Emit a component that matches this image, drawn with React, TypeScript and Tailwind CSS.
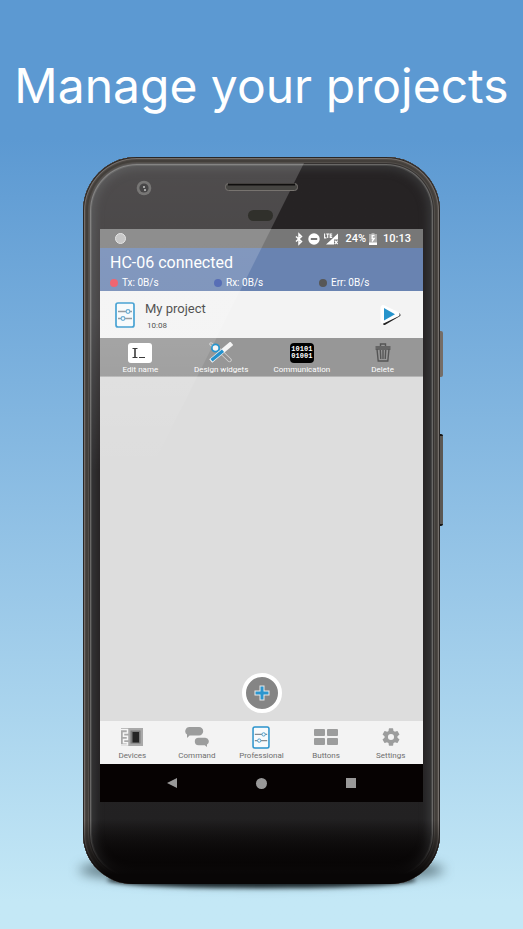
import React from "react";

type IconProps = { className?: string };

const SlidersIcon = ({ className }: IconProps) => (
  <svg className={className} viewBox="0 0 20 26" fill="none" aria-hidden="true">
    <rect x="1" y="1" width="18" height="24" rx="2" fill="#f7fafc" stroke="#2a93cc" strokeWidth="1.700" />
    <path d="M3 9.500h14M3 16.500h14" stroke="#858b90" strokeWidth="1.300" />
    <circle cx="13" cy="9.500" r="1.900" fill="#f7fafc" stroke="#4b9dcc" strokeWidth="1.100" />
    <circle cx="8" cy="16.500" r="1.900" fill="#f7fafc" stroke="#4b9dcc" strokeWidth="1.100" />
  </svg>
);

const DeviceIcon = () => (
  <svg className="h-[18px] w-[22px]" viewBox="0 0 22 18" aria-hidden="true">
    <rect width="22" height="18" fill="#a9a9a9" />
    <path d="M0 1.500h6.500v3.500H2.500v3.200h4v3.300h-4v3.200h4V17H0" fill="none" stroke="#f5f5f5" strokeWidth="1.500" />
    <rect x="9.500" y="2.500" width="10" height="13" fill="#7b7b7b" />
    <rect x="11.500" y="4" width="6.500" height="10.500" fill="#252525" />
  </svg>
);

const ChatIcon = () => (
  <svg className="h-[20px] w-[24px]" viewBox="0 0 24 20" fill="#9c9d9d" aria-hidden="true">
    <path d="M4.500 0h9.500a4.200 4.200 0 0 1 0 8.400H4.600L2 11V7.600A4.200 4.200 0 0 1 4.500 0Z" />
    <path d="M13.500 10.800h6.500a3.600 3.600 0 0 1 2 6.700V20l-2.200-1.800h-6.300a3.700 3.700 0 0 1 0-7.400Z" />
  </svg>
);

const ButtonsIcon = () => (
  <svg className="h-[16px] w-[24px]" viewBox="0 0 24 16" fill="#9c9d9d" aria-hidden="true">
    <rect width="11" height="7" rx="1" />
    <rect x="13" width="11" height="7" rx="1" />
    <rect y="9" width="11" height="7" rx="1" />
    <rect x="13" y="9" width="11" height="7" rx="1" />
  </svg>
);

const GearIcon = () => (
  <svg className="size-[18px]" viewBox="2 2 20 20" fill="#9c9d9d" aria-hidden="true">
    <path d="M19.140 12.940c.04-.3.06-.61.06-.94s-.02-.64-.07-.94l2.030-1.580a.49.49 0 0 0 .12-.61l-1.920-3.320a.49.49 0 0 0-.59-.22l-2.390.96a7 7 0 0 0-1.620-.94l-.36-2.540A.48.48 0 0 0 13.920 2.400h-3.840a.48.48 0 0 0-.47.41l-.36 2.540a7.400 7.400 0 0 0-1.620.94l-2.390-.96a.48.48 0 0 0-.59.22L2.740 8.870a.48.48 0 0 0 .12.61l2.030 1.580c-.05.3-.09.63-.09.94s.02.64.07.94l-2.030 1.580a.49.49 0 0 0-.12.61l1.920 3.320c.12.22.37.29.59.22l2.390-.96c.5.38 1.030.7 1.620.94l.36 2.540c.05.24.24.41.48.41h3.840c.24 0 .44-.17.47-.41l.36-2.540a7 7 0 0 0 1.620-.94l2.390.96c.22.08.47 0 .59-.22l1.920-3.320a.48.48 0 0 0-.12-.61ZM12 15.400a3.400 3.400 0 1 1 0-6.800 3.400 3.400 0 0 1 0 6.800Z" />
  </svg>
);

const RenameIcon = () => (
  <svg className="h-[20px] w-[24px]" viewBox="0 0 24 20" fill="none" stroke="#222" aria-hidden="true">
    <rect width="24" height="20" rx="3" fill="#fff" stroke="none" />
    <path d="M4.500 5.500h5M4.500 14.500h5M11 14.500h6" />
    <path d="M7 5.500v9" strokeWidth="1.600" />
  </svg>
);

const ToolsIcon = () => (
  <svg className="h-[21px] w-[24px]" viewBox="0 0 24 21" fill="none" strokeLinecap="round" aria-hidden="true">
    <path d="M10 8l10.500 10" stroke="#d0d0d0" strokeWidth="4.400" />
    <path d="M10 8l10.500 10" stroke="#929292" strokeWidth="2.600" />
    <path d="M2 2l4 3.500" stroke="#d0d0d0" strokeWidth="3.400" />
    <path d="M2 2l4 3.500" stroke="#929292" strokeWidth="1.600" />
    <circle cx="6.500" cy="6" r="3.700" fill="#f5f5f5" stroke="#2794cc" strokeWidth="1.800" />
    <path d="M3.500 17.500L21 2.800" stroke="#f5f5f5" strokeWidth="4.600" strokeLinecap="square" />
    <path d="M2.500 18.300L14 8.700" stroke="#2491cc" strokeWidth="3.400" strokeLinecap="butt" />
  </svg>
);

const BinaryIcon = () => (
  <span className="flex h-[20px] w-[24px] flex-col items-center justify-center rounded bg-black font-['Liberation_Mono',monospace] text-[7px] leading-[7px] font-bold text-white">
    <span>10101</span>
    <span>01001</span>
  </span>
);

const TrashIcon = () => (
  <svg className="h-[19px] w-[16px]" viewBox="0 0 16 19" fill="none" stroke="#555" strokeWidth="1.400" aria-hidden="true">
    <path d="M5.500 3V1h5v2M.5 4h15M.5 6h15M2 6l1.200 12h9.600L14 6M5.300 7l.5 9M8 7v9M10.700 7l-.5 9" />
  </svg>
);

const PlayIcon = () => (
  <svg className="h-[22px] w-[22px]" viewBox="0 0 22 22" strokeLinejoin="round" aria-hidden="true">
    <path d="M4.500 5v14.500l14.500-8.500Z" fill="#222" stroke="#222" strokeWidth="3" />
    <path d="M3 3.500v13.500l14-6.750Z" fill="#fff" stroke="#fff" strokeWidth="5" />
    <path d="M4 4v12.500l11-6.250Z" fill="#2794cc" />
  </svg>
);

const StatusIcons = () => (
  <svg className="h-[14px] w-[44px]" viewBox="0 0 44 14" fill="none" aria-hidden="true">
    <path d="M1 4.500l5.500 5L4 12V2l2.500 2.500L1 9.500" stroke="#fff" strokeWidth="1.500" />
    <circle cx="19" cy="7" r="5.700" fill="#fff" />
    <path d="M15.800 7h6.400" stroke="#777" strokeWidth="1.800" />
    <path d="M31 12.500L43 1.500V7.500h-4v5Z" fill="#fff" />
    <path d="M39.700 8.700l3 3.500m0-3.500l-3 3.500" stroke="#fff" strokeWidth="1.200" />
    <path d="M29.600 1.500v4.400h1.800M31.200 2h3M32.700 2v3.900M37.200 2h-2v3.400h2M35.200 3.700h2" stroke="#fff" strokeWidth="1.100" />
  </svg>
);

const BatteryIcon = () => (
  <svg className="h-[12px] w-[8px]" viewBox="0 0 8 12" aria-hidden="true">
    <path d="M2.500 0h3v1H8v11H0V1h2.500Z" fill="#adadad" />
    <path d="M0 9.500h8V12H0Z" fill="#fff" />
    <path d="M5.500 2.500H3.200V5.500h2L3 8.500" fill="none" stroke="#fff" strokeWidth="1.300" />
  </svg>
);

const PhoneFace = () => (
  <svg className="pointer-events-none absolute inset-x-0 top-0 h-[72px] w-full" viewBox="0 0 357 72" aria-hidden="true">
    <circle cx="61" cy="31" r="7.300" fill="#777675" />
    <circle cx="61" cy="31" r="4.600" fill="#474647" />
    <path d="M60 29h2v2h-2ZM61 32h2v2h-2Z" fill="#a4a4a4" />
    <rect x="142.500" y="26.500" width="72" height="7" rx="3" fill="#464542" stroke="#77736f" />
    <path d="M145 27.500h67" stroke="#100f0e" strokeWidth="2" />
    <rect x="165" y="53" width="25" height="11" rx="5.500" fill="#30302b" />
  </svg>
);

const stats = [
  { label: "Tx: 0B/s", dot: "bg-[#ec4956]" },
  { label: "Rx: 0B/s", dot: "bg-[#3853a8]" },
  { label: "Err: 0B/s", dot: "bg-[#575757]" },
];

const actions = [
  { label: "Edit name", icon: <RenameIcon /> },
  { label: "Design widgets", icon: <ToolsIcon /> },
  { label: "Communication", icon: <BinaryIcon /> },
  { label: "Delete", icon: <TrashIcon /> },
];

const tabs = [
  { label: "Devices", icon: <DeviceIcon /> },
  { label: "Command", icon: <ChatIcon /> },
  { label: "Professional", icon: <SlidersIcon className="h-[23px] w-[18px]" /> },
  { label: "Buttons", icon: <ButtonsIcon /> },
  { label: "Settings", icon: <GearIcon /> },
];

function Screen() {
  return (
    <div className="flex flex-col bg-[#dddddd]">
      <div className="flex h-[19px] items-center bg-[#777777] pr-3 pl-[15px] text-[11px] font-medium text-white">
        <span className="size-[11px] rounded-full border border-[#e0e0e0] bg-[#bdbdbd]" />
        <div className="ml-auto flex items-center gap-[6px]">
          <StatusIcons />
          <div className="flex items-center gap-[3px] pt-px">
            <span>24%</span>
            <BatteryIcon />
          </div>
          <span className="pt-px">10:13</span>
        </div>
      </div>

      <header className="flex h-[43px] flex-col bg-[#6983b1] px-[10px] pt-[5px] text-white">
        <h2 className="text-base leading-5">HC-06 connected</h2>
        <ul className="grid grid-cols-[104px_105px_1fr] pt-[3px] text-[10px] leading-[14px]">
          {stats.map((s) => (
            <li key={s.label} className="flex items-center gap-1">
              <span className={"size-2 rounded-full " + s.dot} />
              {s.label}
            </li>
          ))}
        </ul>
      </header>

      <section className="flex h-[47px] items-center bg-[#f3f3f3] pr-[21px] pl-[15px]">
        <SlidersIcon className="h-[26px] w-5" />
        <div className="ml-[10px] pt-[4px] text-[#333]">
          <h3 className="text-[13px] leading-4">My project</h3>
          <p className="pt-[3px] pl-[2px] text-[8px] leading-3">10:08</p>
        </div>
        <button type="button" aria-label="Run project" className="ml-auto">
          <PlayIcon />
        </button>
      </section>

      <div className="grid h-[39px] grid-cols-4 border-b border-[#b5b5b5] bg-[#979797]">
        {actions.map((a) => (
          <button key={a.label} type="button" className="flex flex-col items-center pt-[3px] text-[8px] leading-3 whitespace-nowrap text-white">
            <span className="flex h-[23px] items-center">{a.icon}</span>
            {a.label}
          </button>
        ))}
      </div>

      <main className="flex h-[344px] items-end justify-center pb-2">
        <button
          type="button"
          aria-label="Add project"
          className="flex size-10 items-center justify-center rounded-full border-4 border-white bg-[#858585]"
        >
          <svg className="size-5" viewBox="0 0 20 20" fill="none" aria-hidden="true">
            <path d="M10 2.500v15M2.500 10h15" stroke="#e8e8e8" strokeWidth="5" />
            <path d="M10 3.500v13M3.500 10h13" stroke="#2a96cf" strokeWidth="3" />
          </svg>
        </button>
      </main>

      <nav className="grid h-[43px] grid-cols-5 bg-[#f3f3f3]">
        {tabs.map((t) => (
          <button key={t.label} type="button" className="flex flex-col items-center pt-1 text-[8px] leading-3 text-[#6e6e6e]">
            <span className="flex h-6 items-center">{t.icon}</span>
            <span className="pt-px">{t.label}</span>
          </button>
        ))}
      </nav>

      <div className="flex h-[38px] items-center justify-center gap-[79px] bg-[#060202]">
        <button type="button" aria-label="Back">
          <svg className="size-[10px]" viewBox="0 0 10 10" fill="#999" aria-hidden="true">
            <path d="M10 0v10L0 5Z" />
          </svg>
        </button>
        <button type="button" aria-label="Home" className="size-[11px] rounded-full bg-[#999]" />
        <button type="button" aria-label="Recent apps" className="size-[10px] bg-[#999]" />
      </div>
    </div>
  );
}

export default function App() {
  return (
    <div className="flex min-h-screen flex-col items-center bg-linear-to-b from-[#5c99d2] from-15% to-[#c4e8f6] to-97% font-[Roboto,sans-serif]">
      <h1 className="pt-[56px] text-center font-[Inter,sans-serif] text-[48px] leading-[60px] font-normal whitespace-nowrap text-white">
        Manage your projects
      </h1>

      <div className="relative mt-[41px] mb-[45px] w-full max-w-[357px]">
        <div className="absolute -inset-x-1 bottom-0 h-7 rounded-[50%] bg-[#33484f]/70 blur-[6px]" />
        <div className="absolute inset-x-6 -bottom-1 h-4 rounded-[50%] bg-[#1d282c] blur-[2px]" />
        <div className="absolute top-[174px] -right-[3px] h-[46px] w-1 rounded-r-xs bg-[#756d67]" />
        <div className="absolute top-[277px] -right-[3px] h-[92px] w-1 rounded-r-xs border-y-2 border-[#171615] bg-[#5b5854]" />

        <div className="relative overflow-hidden rounded-t-[54px] rounded-b-[50px] bg-linear-to-b from-[#262324] from-80% via-[#222122] via-91% to-[#080606] to-97% px-[17px] pt-[72px] pb-[82px] shadow-[inset_0_0_0_1px_#2a2726,inset_0_0_0_2px_#756f6b,inset_0_0_0_3px_#4f4a46,inset_0_0_0_5px_#433f3b,inset_0_0_0_6px_#524e4a,inset_0_0_0_7px_#353231,inset_0_0_0_8px_#696867,inset_0_0_0_9px_#464646,inset_0_0_9px_12px_#383839]">
          <Screen />
          <div className="pointer-events-none absolute inset-x-[6px] top-[6px] h-[440px] rounded-tl-[48px] bg-linear-to-b from-white/19 via-white/15 via-35% to-white/0 to-70% [clip-path:polygon(0_0,215px_0,0_430px)]" />
          <PhoneFace />
          <div className="pointer-events-none absolute inset-x-0 bottom-0 h-[64px] bg-linear-to-b from-transparent to-[#080606] to-85%" />
        </div>
      </div>
    </div>
  );
}
